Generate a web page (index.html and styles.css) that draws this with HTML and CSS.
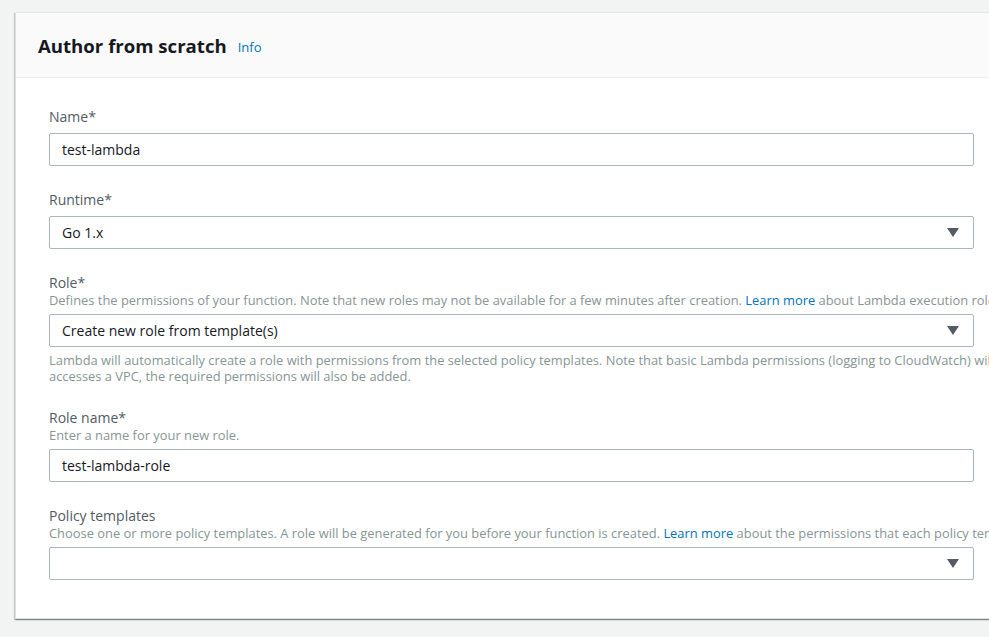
FILE: index.html
```html
<!DOCTYPE html>
<html>
<head>
<meta charset="utf-8">
<link rel="stylesheet" href="styles.css">
</head>
<body>
<div class="page">
  <section class="card">
    <header class="card-header">
      <h2 class="title">Author from scratch</h2>
      <a class="info" href="#">Info</a>
    </header>
    <div class="card-body">
      <div class="field">
        <label class="label">Name*</label>
        <div class="control"><span class="value">test-lambda</span></div>
      </div>
      <div class="field">
        <label class="label">Runtime*</label>
        <div class="control select"><span class="value">Go 1.x</span><span class="caret"></span></div>
      </div>
      <div class="field">
        <label class="label">Role*</label>
        <p class="desc">Defines the permissions of your function. Note that new roles may not be available for a few minutes after creation. <a href="#" class="link">Learn more</a> about Lambda execution roles.</p>
        <div class="control select"><span class="value">Create new role from template(s)</span><span class="caret"></span></div>
        <p class="help">Lambda will automatically create a role with permissions from the selected policy templates. Note that basic Lambda permissions (logging to CloudWatch) will be added. If your function<br>accesses a VPC, the required permissions will also be added.</p>
      </div>
      <div class="field">
        <label class="label">Role name*</label>
        <p class="desc">Enter a name for your new role.</p>
        <div class="control"><span class="value">test-lambda-role</span></div>
      </div>
      <div class="field">
        <label class="label">Policy templates</label>
        <p class="desc">Choose one or more policy templates. A role will be generated for you before your function is created. <a href="#" class="link">Learn more</a> about the permissions that each policy template adds to your role.</p>
        <div class="control select"><span class="value"></span><span class="caret"></span></div>
      </div>
    </div>
  </section>
</div>
</body>
</html>
```
FILE: styles.css
```css
html, body {
  margin: 0;
  padding: 0;
  background: #f2f3f3;
  overflow: hidden;
}
body {
  font-family: "Open Sans", "Noto Sans", sans-serif;
  color: #16191f;
  width: 989px;
  height: 637px;
}
.page {
  padding: 12px 0 0 15px;
}
.card {
  width: 1400px;
  background: #fff;
  border: 1px solid #dde1e1;
  border-top-color: #e3e6e6;
  box-shadow: 0 1px 1px rgba(0,28,36,0.3), 1px 1px 1px rgba(0,28,36,0.15), -1px 1px 1px rgba(0,28,36,0.15);
}
.card-header {
  background: #fafafa;
  border-bottom: 1px solid #eaeded;
  height: 64px;
  display: flex;
  align-items: center;
  padding: 0 22px;
  gap: 11px;
}
.title {
  margin: 0;
  font-size: 18.6px;
  font-weight: 700;
  color: #16191f;
}
.info {
  font-size: 13px;
  color: #0073bb;
  text-decoration: none;
  margin-top: 3px;
}
.card-body {
  padding: 30px 33px 38px 33px;
  display: flex;
  flex-direction: column;
  gap: 25px;
}
.field {
  display: flex;
  flex-direction: column;
}
.label {
  font-size: 14px;
  line-height: 18px;
  color: #545b64;
}
.desc, .help {
  margin: 0;
  font-size: 12.9px;
  color: #879596;
  white-space: nowrap;
}
.desc {
  line-height: 18px;
  margin-top: -1px;
}
.help {
  line-height: 16px;
  margin-top: 5px;
}
.link {
  color: #0073bb;
  text-decoration: none;
}
.control {
  box-sizing: border-box;
  width: 925px;
  height: 33px;
  border: 1px solid #aab7b8;
  border-radius: 2px;
  display: flex;
  align-items: center;
  padding: 0 12px;
  font-size: 14px;
  color: #16191f;
  margin-top: 7px;
}
.desc + .control {
  margin-top: 5px;
}
.value {
  flex: 1;
}
.caret {
  width: 0;
  height: 0;
  border-left: 6px solid transparent;
  border-right: 6px solid transparent;
  border-top: 9px solid #545b64;
  margin-right: 2px;
}
```
